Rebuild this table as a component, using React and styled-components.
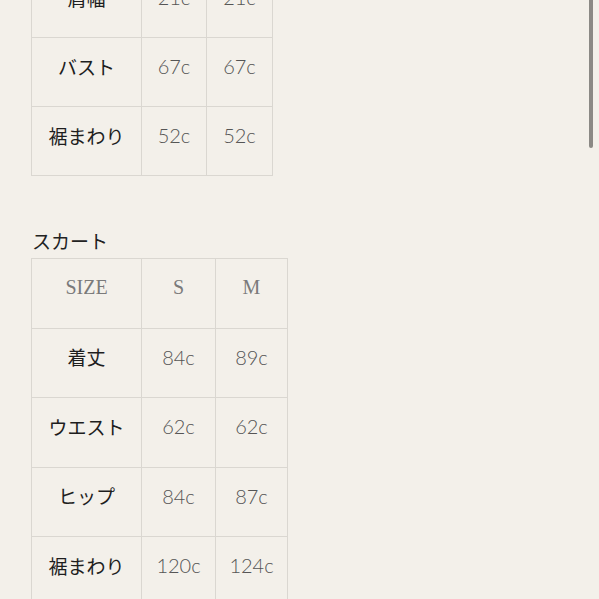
import React from "react";
import styled, { createGlobalStyle } from "styled-components";

const GlobalStyle = createGlobalStyle`
  html, body {
    margin: 0;
    padding: 0;
    background: #f3f0ea;
    overflow: hidden;
  }
  body {
    font-family: "Noto Sans CJK JP", "Noto Sans", sans-serif;
  }
`;

const Page = styled.div`
  width: 599px;
  height: 599px;
  overflow: hidden;
  position: relative;
  background: #f3f0ea;
`;

const Content = styled.div`
  margin-top: -32px;
  padding-left: 31px;
`;

const Heading = styled.h3`
  margin: 52px 0 4px 1px;
  font-size: 19px;
  line-height: 26px;
  font-weight: 400;
  color: #222;
  font-family: "Noto Sans CJK JP", sans-serif;
`;

const Grid = styled.div`
  display: grid;
  grid-template-columns: ${(p) => p.$cols};
  grid-auto-rows: ${(p) => p.$row}px;
  width: max-content;
  border-left: 1px solid #dad7d1;
  border-top: 1px solid #dad7d1;
`;

const Cell = styled.div`
  display: flex;
  align-items: center;
  justify-content: center;
  padding-bottom: 12px;
  border-right: 1px solid #dad7d1;
  border-bottom: 1px solid #dad7d1;
  box-sizing: border-box;
`;

const Label = styled(Cell)`
  font-family: "Noto Sans CJK JP", sans-serif;
  font-size: 19px;
  font-weight: 400;
  color: #1e1e1e;
`;

const Value = styled(Cell)`
  font-family: Lato, "Liberation Sans", sans-serif;
  font-weight: 300;
  font-size: 20px;
  color: #555;
`;

const Head = styled(Cell)`
  font-family: "Liberation Serif", serif;
  font-size: 20px;
  color: #7a7a7a;
`;

const ScrollThumb = styled.div`
  position: absolute;
  top: -2px;
  right: 6px;
  width: 4px;
  height: 150px;
  border-radius: 2px;
  background: #8b8985;
`;

const tops = [
  ["肩幅", "21c", "21c"],
  ["バスト", "67c", "67c"],
  ["裾まわり", "52c", "52c"],
];

const skirt = [
  ["着丈", "84c", "89c"],
  ["ウエスト", "62c", "62c"],
  ["ヒップ", "84c", "87c"],
  ["裾まわり", "120c", "124c"],
];

const SizeTable = ({ cols, row, head, rows }) => (
  <Grid $cols={cols} $row={row}>
    {head && head.map((h) => <Head key={h}>{h}</Head>)}
    {rows.map(([label, s, m]) => (
      <React.Fragment key={label}>
        <Label>{label}</Label>
        <Value>{s}</Value>
        <Value>{m}</Value>
      </React.Fragment>
    ))}
  </Grid>
);

export default function App() {
  return (
    <Page>
      <GlobalStyle />
      <Content>
        <SizeTable cols="110px 65px 66px" row={69} rows={tops} />
        <Heading>スカート</Heading>
        <SizeTable
          cols="110px 74px 72px"
          row={69.5}
          head={["SIZE", "S", "M"]}
          rows={skirt}
        />
      </Content>
      <ScrollThumb />
    </Page>
  );
}
